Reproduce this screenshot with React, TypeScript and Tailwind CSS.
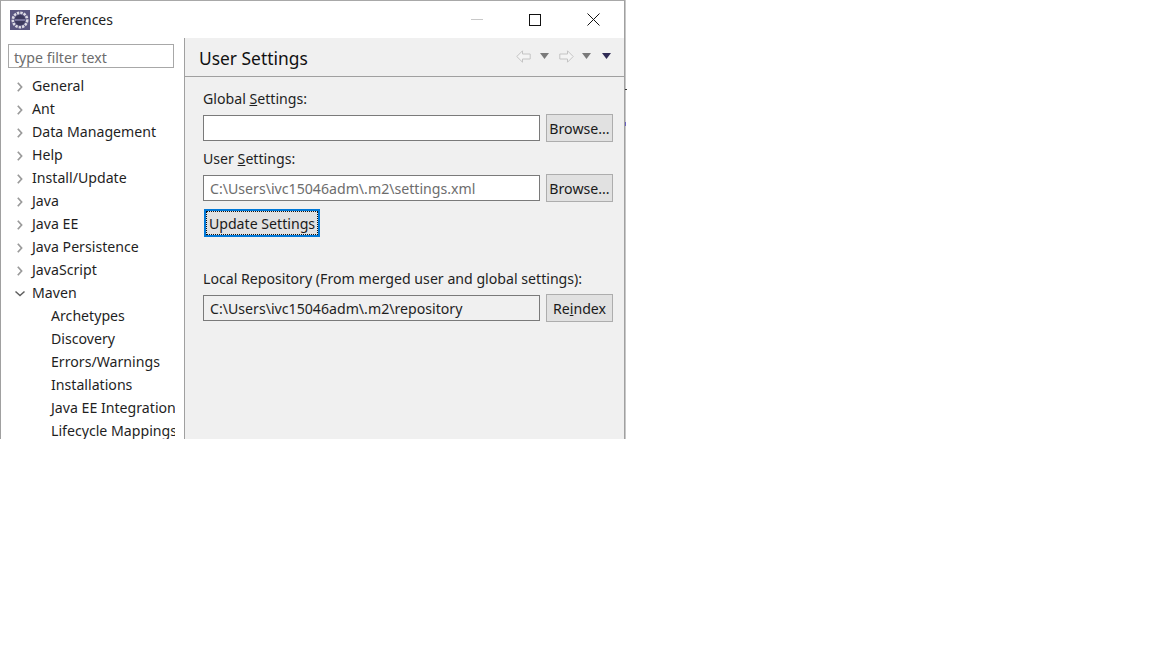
import type { ReactNode } from "react";

const TOP_NODES = [
  "General",
  "Ant",
  "Data Management",
  "Help",
  "Install/Update",
  "Java",
  "Java EE",
  "Java Persistence",
  "JavaScript",
];

const MAVEN_CHILDREN = [
  "Archetypes",
  "Discovery",
  "Errors/Warnings",
  "Installations",
  "Java EE Integration",
  "Lifecycle Mappings",
];

function Chevron({ open = false }: { open?: boolean }) {
  return (
    <svg width="12" height="12" viewBox="0 0 12 12" fill="none" className="mt-[3px] shrink-0">
      {open ? (
        <path d="M1.5 3.5 L6 7.5 L10.5 3.5" stroke="#5f5f5f" strokeWidth="1.5" />
      ) : (
        <path d="M3.8 1.8 L7.6 6 L3.8 10.2" stroke="#9a9a9a" strokeWidth="1.7" />
      )}
    </svg>
  );
}

function Caret({ color = "#7a7a7a" }: { color?: string }) {
  return (
    <svg width="9" height="6" viewBox="0 0 9 6">
      <path d="M0 0 H9 L4.5 6 Z" fill={color} />
    </svg>
  );
}

function NavArrow({ flip = false }: { flip?: boolean }) {
  return (
    <svg width="15" height="13" viewBox="0 0 15 13" fill="none" className={flip ? "-scale-x-100" : ""}>
      <path
        d="M0.8 6.5 L6.5 0.8 V4 H14.2 V9 H6.5 V12.2 Z"
        fill="#f4f4f4"
        stroke="#c4c4c4"
        strokeWidth="1"
      />
    </svg>
  );
}

function Btn({ children }: { children: ReactNode }) {
  return (
    <button className="h-7 w-[67px] shrink-0 border border-[#adadad] bg-[#e1e1e1] pt-px text-[14.15px] text-[#1a1a1a]">
      {children}
    </button>
  );
}

function Field({ value, tone }: { value?: string; tone: "white" | "gray" }) {
  return (
    <div
      className={`flex h-[26px] w-[337px] items-center border border-[#7a7a7a] px-[6px] pt-px text-[14.15px] ${
        tone === "white" ? "bg-white text-[#6d6d6d]" : "bg-[#f0f0f0] text-[#1f1f1f]"
      }`}
    >
      {value}
    </div>
  );
}

export default function App() {
  return (
    <div className="h-[648px] w-[1152px] bg-white font-['Noto_Sans','Open_Sans',sans-serif]">
      <div className="relative flex h-[439px] w-[625px] flex-col border-x border-t border-l-[#a0a0a0] border-r-[#a0a0a0] border-t-[#a8a8a8] bg-white shadow-[1px_0_0_#c8c8c8]">
        {/* bits of the window behind */}
        <span className="absolute left-[624px] top-[88px] h-px w-[2px] bg-[#333]" />
        <span className="absolute left-[624px] top-[121px] h-[4px] w-px bg-[#6a62c0]" />

        {/* title bar */}
        <div className="flex h-[37px] shrink-0 items-center">
          <svg width="20" height="20" viewBox="0 0 20 20" className="ml-[9px] shrink-0">
            <rect width="20" height="20" fill="#5a5680" />
            <circle cx="10" cy="10" r="7.2" fill="none" stroke="#dcdae4" strokeWidth="2.6" strokeDasharray="2.4 1" />
            <circle cx="10" cy="10" r="5.2" fill="#3d3a5e" />
            <rect x="4.8" y="9" width="10.4" height="2" fill="#77739a" />
          </svg>
          <span className="ml-[5px] text-[14px] text-[#222]">Preferences</span>
          <div className="ml-auto flex items-center">
            <div className="mr-[46px] h-px w-3 bg-[#c8c8c8]" />
            <div className="mr-[46px] size-3 border border-[#111]" />
            <svg width="13" height="13" viewBox="0 0 13 13" className="mr-[24px]">
              <path d="M0.5 0.5 L12.5 12.5 M12.5 0.5 L0.5 12.5" stroke="#111" strokeWidth="1" />
            </svg>
          </div>
        </div>

        <div className="flex min-h-0 flex-1">
          {/* tree */}
          <div className="flex w-[184px] shrink-0 flex-col border-r border-r-[#a0a0a0] pt-[6px]">
            <div className="ml-[7px] flex h-6 w-[166px] items-center border border-[#a8a8a8] px-[5px] pt-[3px] text-[14.15px] text-[#6d6d6d]">
              type filter text
            </div>
            <div className="mt-[6px] w-[174px] overflow-hidden text-[14.15px] text-[#1f1f1f]">
              {TOP_NODES.map((name) => (
                <div key={name} className="flex h-[23px] items-center whitespace-nowrap pl-[13px]">
                  <Chevron />
                  <span className="ml-[6px]">{name}</span>
                </div>
              ))}
              <div className="flex h-[23px] items-center pl-[13px]">
                <Chevron open />
                <span className="ml-[6px]">Maven</span>
              </div>
              {MAVEN_CHILDREN.map((name) => (
                <div key={name} className="flex h-[23px] items-center whitespace-nowrap pl-[50px]">
                  {name}
                </div>
              ))}
            </div>
          </div>

          {/* page */}
          <div className="flex min-w-0 flex-1 flex-col bg-[#f0f0f0]">
            <div className="flex h-[39px] shrink-0 items-center border-b border-b-[#a0a0a0] pl-[14px] pr-[13px]">
              <span className="pt-[2px] text-[17.4px] text-[#111]">User Settings</span>
              <div className="mb-[2px] ml-auto flex items-center">
                <NavArrow />
                <span className="ml-[9px] flex"><Caret /></span>
                <span className="ml-[10px] flex"><NavArrow flip /></span>
                <span className="ml-[8px] flex"><Caret /></span>
                <span className="ml-[11px] flex"><Caret color="#2f2b55" /></span>
              </div>
            </div>

            <div className="flex flex-col pl-[18px] pt-[11px] text-[14.15px] text-[#1f1f1f]">
              <div className="h-[21px] leading-[21px]">
                Global <span className="underline">S</span>ettings:
              </div>
              <div className="mt-[5px] flex items-center gap-[6px]">
                <Field tone="white" />
                <Btn>Browse...</Btn>
              </div>
              <div className="mt-[6px] h-[21px] leading-[21px]">
                User <span className="underline">S</span>ettings:
              </div>
              <div className="mt-[5px] flex items-center gap-[6px]">
                <Field tone="white" value="C:\Users\ivc15046adm\.m2\settings.xml" />
                <Btn>Browse...</Btn>
              </div>
              <button className="ml-[1px] mt-[7px] flex h-7 w-[116px] items-center justify-center border-2 border-[#0078d7] bg-[#e1e1e1] pt-px text-[14.15px] text-[#1a1a1a] outline-1 -outline-offset-3 outline-dotted outline-[#111]">
                Update Settings
              </button>
              <div className="mt-[31px] h-[21px] leading-[21px]">
                Local Repository (From merged user and global settings):
              </div>
              <div className="mt-[5px] flex items-center gap-[6px]">
                <Field tone="gray" value="C:\Users\ivc15046adm\.m2\repository" />
                <Btn>
                  Re<span className="underline">i</span>ndex
                </Btn>
              </div>
            </div>
          </div>
        </div>
      </div>
    </div>
  );
}
